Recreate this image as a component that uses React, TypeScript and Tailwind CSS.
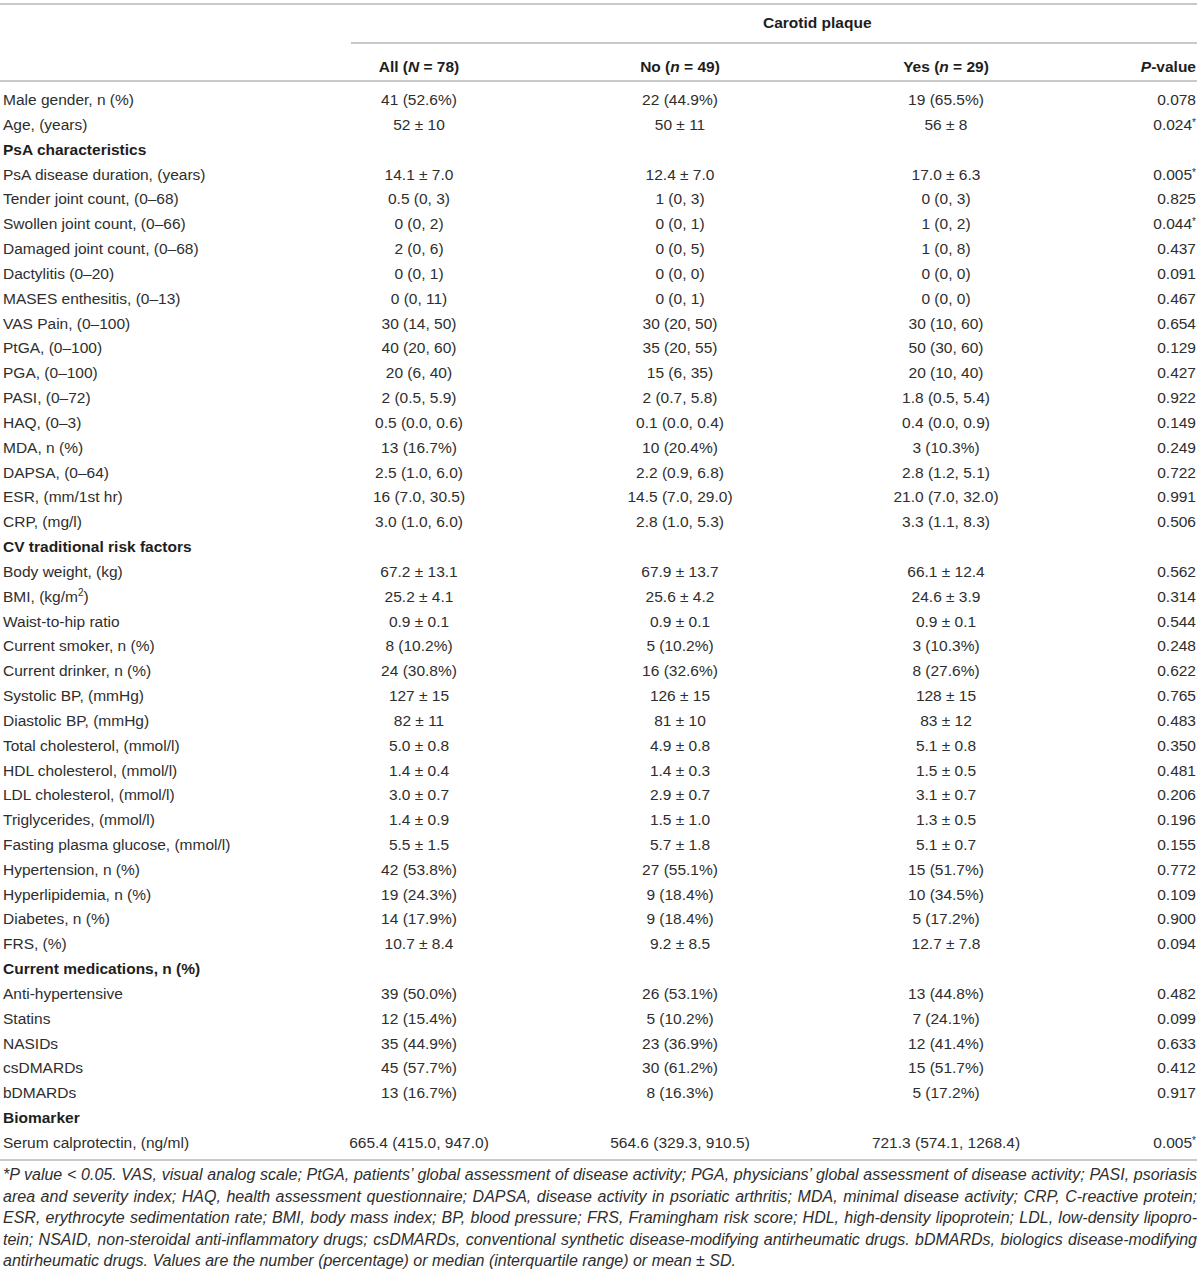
import React from "react";

type Row = { label: React.ReactNode; v?: [string, string, string, string]; section?: boolean };

const rows: Row[] = [
  { label: "Male gender, n (%)", v: ["41 (52.6%)", "22 (44.9%)", "19 (65.5%)", "0.078"] },
  { label: "Age, (years)", v: ["52 ± 10", "50 ± 11", "56 ± 8", "0.024*"] },
  { label: "PsA characteristics", section: true },
  { label: "PsA disease duration, (years)", v: ["14.1 ± 7.0", "12.4 ± 7.0", "17.0 ± 6.3", "0.005*"] },
  { label: "Tender joint count, (0–68)", v: ["0.5 (0, 3)", "1 (0, 3)", "0 (0, 3)", "0.825"] },
  { label: "Swollen joint count, (0–66)", v: ["0 (0, 2)", "0 (0, 1)", "1 (0, 2)", "0.044*"] },
  { label: "Damaged joint count, (0–68)", v: ["2 (0, 6)", "0 (0, 5)", "1 (0, 8)", "0.437"] },
  { label: "Dactylitis (0–20)", v: ["0 (0, 1)", "0 (0, 0)", "0 (0, 0)", "0.091"] },
  { label: "MASES enthesitis, (0–13)", v: ["0 (0, 11)", "0 (0, 1)", "0 (0, 0)", "0.467"] },
  { label: "VAS Pain, (0–100)", v: ["30 (14, 50)", "30 (20, 50)", "30 (10, 60)", "0.654"] },
  { label: "PtGA, (0–100)", v: ["40 (20, 60)", "35 (20, 55)", "50 (30, 60)", "0.129"] },
  { label: "PGA, (0–100)", v: ["20 (6, 40)", "15 (6, 35)", "20 (10, 40)", "0.427"] },
  { label: "PASI, (0–72)", v: ["2 (0.5, 5.9)", "2 (0.7, 5.8)", "1.8 (0.5, 5.4)", "0.922"] },
  { label: "HAQ, (0–3)", v: ["0.5 (0.0, 0.6)", "0.1 (0.0, 0.4)", "0.4 (0.0, 0.9)", "0.149"] },
  { label: "MDA, n (%)", v: ["13 (16.7%)", "10 (20.4%)", "3 (10.3%)", "0.249"] },
  { label: "DAPSA, (0–64)", v: ["2.5 (1.0, 6.0)", "2.2 (0.9, 6.8)", "2.8 (1.2, 5.1)", "0.722"] },
  { label: "ESR, (mm/1st hr)", v: ["16 (7.0, 30.5)", "14.5 (7.0, 29.0)", "21.0 (7.0, 32.0)", "0.991"] },
  { label: "CRP, (mg/l)", v: ["3.0 (1.0, 6.0)", "2.8 (1.0, 5.3)", "3.3 (1.1, 8.3)", "0.506"] },
  { label: "CV traditional risk factors", section: true },
  { label: "Body weight, (kg)", v: ["67.2 ± 13.1", "67.9 ± 13.7", "66.1 ± 12.4", "0.562"] },
  {
    label: (
      <>
        BMI, (kg/m<sup className="text-[10px] relative top-[-6px]">2</sup>)
      </>
    ),
    v: ["25.2 ± 4.1", "25.6 ± 4.2", "24.6 ± 3.9", "0.314"],
  },
  { label: "Waist-to-hip ratio", v: ["0.9 ± 0.1", "0.9 ± 0.1", "0.9 ± 0.1", "0.544"] },
  { label: "Current smoker, n (%)", v: ["8 (10.2%)", "5 (10.2%)", "3 (10.3%)", "0.248"] },
  { label: "Current drinker, n (%)", v: ["24 (30.8%)", "16 (32.6%)", "8 (27.6%)", "0.622"] },
  { label: "Systolic BP, (mmHg)", v: ["127 ± 15", "126 ± 15", "128 ± 15", "0.765"] },
  { label: "Diastolic BP, (mmHg)", v: ["82 ± 11", "81 ± 10", "83 ± 12", "0.483"] },
  { label: "Total cholesterol, (mmol/l)", v: ["5.0 ± 0.8", "4.9 ± 0.8", "5.1 ± 0.8", "0.350"] },
  { label: "HDL cholesterol, (mmol/l)", v: ["1.4 ± 0.4", "1.4 ± 0.3", "1.5 ± 0.5", "0.481"] },
  { label: "LDL cholesterol, (mmol/l)", v: ["3.0 ± 0.7", "2.9 ± 0.7", "3.1 ± 0.7", "0.206"] },
  { label: "Triglycerides, (mmol/l)", v: ["1.4 ± 0.9", "1.5 ± 1.0", "1.3 ± 0.5", "0.196"] },
  { label: "Fasting plasma glucose, (mmol/l)", v: ["5.5 ± 1.5", "5.7 ± 1.8", "5.1 ± 0.7", "0.155"] },
  { label: "Hypertension, n (%)", v: ["42 (53.8%)", "27 (55.1%)", "15 (51.7%)", "0.772"] },
  { label: "Hyperlipidemia, n (%)", v: ["19 (24.3%)", "9 (18.4%)", "10 (34.5%)", "0.109"] },
  { label: "Diabetes, n (%)", v: ["14 (17.9%)", "9 (18.4%)", "5 (17.2%)", "0.900"] },
  { label: "FRS, (%)", v: ["10.7 ± 8.4", "9.2 ± 8.5", "12.7 ± 7.8", "0.094"] },
  { label: "Current medications, n (%)", section: true },
  { label: "Anti-hypertensive", v: ["39 (50.0%)", "26 (53.1%)", "13 (44.8%)", "0.482"] },
  { label: "Statins", v: ["12 (15.4%)", "5 (10.2%)", "7 (24.1%)", "0.099"] },
  { label: "NASIDs", v: ["35 (44.9%)", "23 (36.9%)", "12 (41.4%)", "0.633"] },
  { label: "csDMARDs", v: ["45 (57.7%)", "30 (61.2%)", "15 (51.7%)", "0.412"] },
  { label: "bDMARDs", v: ["13 (16.7%)", "8 (16.3%)", "5 (17.2%)", "0.917"] },
  { label: "Biomarker", section: true },
  { label: "Serum calprotectin, (ng/ml)", v: ["665.4 (415.0, 947.0)", "564.6 (329.3, 910.5)", "721.3 (574.1, 1268.4)", "0.005*"] },
];

function PVal({ s }: { s: string }) {
  if (s.endsWith("*")) {
    return (
      <>
        {s.slice(0, -1)}
        <sup className="text-[10px] relative top-[-4px]">*</sup>
      </>
    );
  }
  return <>{s}</>;
}

const grid = "grid grid-cols-[290px_258px_264px_268px_1fr]";

const foot = [
  "*P value < 0.05. VAS, visual analog scale; PtGA, patients’ global assessment of disease activity; PGA, physicians’ global assessment of disease activity; PASI, psoriasis",
  "area and severity index; HAQ, health assessment questionnaire; DAPSA, disease activity in psoriatic arthritis; MDA, minimal disease activity; CRP, C-reactive protein;",
  "ESR, erythrocyte sedimentation rate; BMI, body mass index; BP, blood pressure; FRS, Framingham risk score; HDL, high-density lipoprotein; LDL, low-density lipopro-",
  "tein; NSAID, non-steroidal anti-inflammatory drugs; csDMARDs, conventional synthetic disease-modifying antirheumatic drugs. bDMARDs, biologics disease-modifying",
];

export default function App() {
  return (
    <div className="w-[1200px] h-[1270px] bg-white text-[#2e2e2e] font-['Liberation_Sans',Arial,sans-serif] overflow-hidden">
      <div className="w-[1197px]">
        <div className="pt-[3px]">
          <div className="h-[2px] bg-[#c9c9c9]" />
        </div>
        <div className="h-[37px] flex items-center pl-[763px] pb-[2px] text-[15.5px] font-bold text-[#1e1e1e]">Carotid plaque</div>
        <div className="h-[2px] bg-[#c9c9c9] ml-[351px]" />
        <div className={`${grid} h-[36px] items-center pt-[10px] text-[15.5px] font-bold text-[#1e1e1e]`}>
          <div />
          <div className="text-center">
            All (<i>N</i> = 78)
          </div>
          <div className="text-center">
            No (<i>n</i> = 49)
          </div>
          <div className="text-center">
            Yes (<i>n</i> = 29)
          </div>
          <div className="text-right pr-[1px]">
            <i>P</i>-value
          </div>
        </div>
        <div className="h-[2px] bg-[#c9c9c9]" />
        <div className="pt-[5.5px]">
          {rows.map((r, i) =>
            r.section ? (
              <div key={i} className="h-[24.83px] flex items-center pl-[3px] text-[15.5px] font-bold text-[#1e1e1e]">
                {r.label}
              </div>
            ) : (
              <div key={i} className={`${grid} h-[24.83px] items-center text-[15.5px] leading-none`}>
                <div className="pl-[3px] whitespace-nowrap">{r.label}</div>
                <div className="text-center whitespace-nowrap">{r.v![0]}</div>
                <div className="text-center whitespace-nowrap">{r.v![1]}</div>
                <div className="text-center whitespace-nowrap">{r.v![2]}</div>
                <div className="text-right pr-[1px] whitespace-nowrap">
                  <PVal s={r.v![3]} />
                </div>
              </div>
            )
          )}
        </div>
        <div className="pt-[4px]">
          <div className="h-[2px] bg-[#c9c9c9]" />
        </div>
        <div className="pt-[3px] pl-[3px] text-[16px] italic leading-[21.5px]">
          {foot.map((l, i) => (
            <div key={i} className="text-justify [text-align-last:justify]">
              {l}
            </div>
          ))}
          <div>antirheumatic drugs. Values are the number (percentage) or median (interquartile range) or mean ± SD.</div>
        </div>
      </div>
    </div>
  );
}
